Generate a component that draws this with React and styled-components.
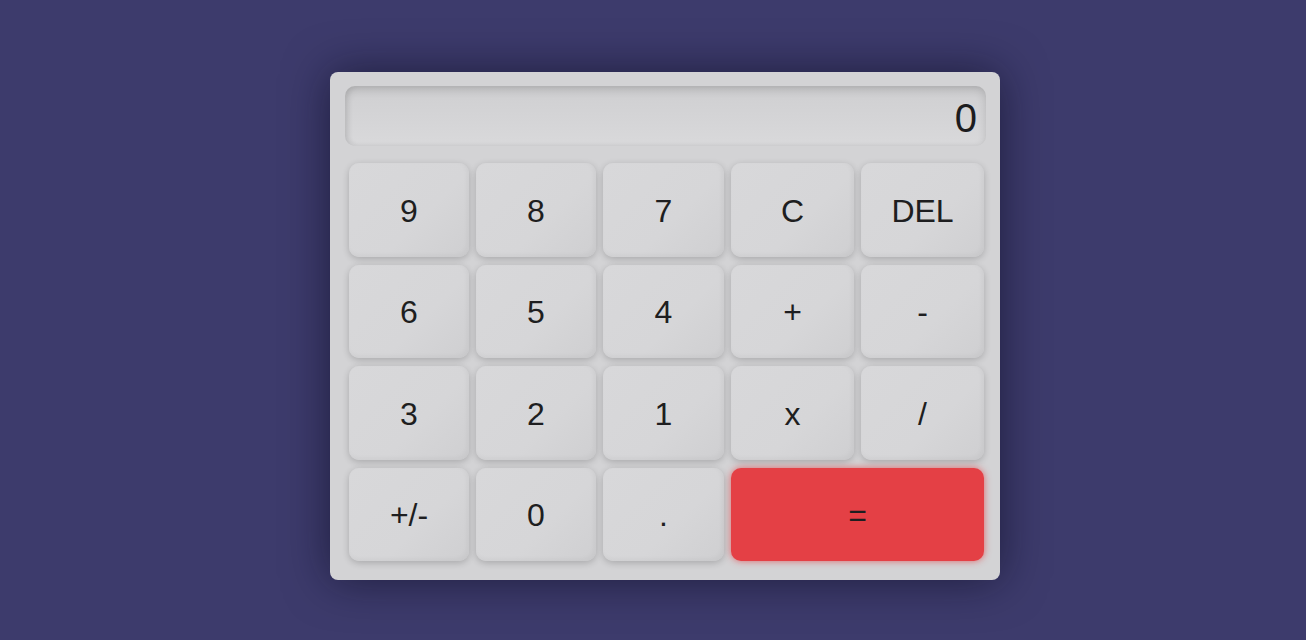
import React, { useState } from "react"
import styled, { createGlobalStyle } from "styled-components"

const GlobalStyle = createGlobalStyle`
  html, body {
    margin: 0;
    padding: 0;
    background: #3d3b6c;
    font-family: "Liberation Sans", Arial, sans-serif;
  }
`

const Page = styled.div`
  min-height: 640px;
  display: flex;
  justify-content: center;
  align-items: flex-start;
  padding: 72px 0 0 24px;
  box-sizing: border-box;
`

const Body = styled.div`
  width: 670px;
  height: 508px;
  box-sizing: border-box;
  background: #d3d3d5;
  border-radius: 8px;
  padding: 14px 17px 19px 15px;
  box-shadow: 0 0 45px rgba(10, 10, 30, 0.6);
  display: flex;
  flex-direction: column;
`

const Display = styled.div`
  height: 60px;
  margin-right: -3px;
  box-sizing: border-box;
  border-radius: 10px;
  background: linear-gradient(180deg, #cfcfd1 0%, #d9d9db 100%);
  box-shadow: inset 0 4px 8px rgba(0, 0, 0, 0.14), inset 3px 0 5px rgba(0, 0, 0, 0.06);
  display: flex;
  align-items: center;
  justify-content: flex-end;
  padding: 4px 9px 0 0;
  font-size: 40px;
  color: #1c1c1e;
`

const Keys = styled.div`
  margin: 17px 0 0 4px;
  display: grid;
  grid-template-columns: 120px 120px 121px 123px 123px;
  grid-auto-rows: 93.5px;
  column-gap: 7px;
  row-gap: 8px;
`

const Key = styled.button`
  grid-column: span ${p => p.$span || 1};
  border: none;
  border-radius: 10px;
  font-family: inherit;
  font-size: 32px;
  color: #1e1e20;
  cursor: pointer;
  background: ${p =>
    p.$accent
      ? "#e44045"
      : "linear-gradient(135deg, #d8d8da 0%, #d6d6d8 60%, #cfcfd1 100%)"};
  box-shadow: ${p =>
    p.$accent
      ? "0 0 7px rgba(228, 64, 69, 0.75)"
      : "0 2px 7px rgba(0, 0, 0, 0.2), inset -2px -2px 5px rgba(0, 0, 0, 0.04)"};
  padding: 3px 0 0;
`

const keys = [
  "9", "8", "7", "C", "DEL",
  "6", "5", "4", "+", "-",
  "3", "2", "1", "x", "/",
  "+/-", "0", ".",
]

export default function App() {
  const [value] = useState("0")
  return (
    <>
      <GlobalStyle />
      <Page>
        <Body>
          <Display>{value}</Display>
          <Keys>
            {keys.map(k => (
              <Key key={k}>{k}</Key>
            ))}
            <Key $span={2} $accent>=</Key>
          </Keys>
        </Body>
      </Page>
    </>
  )
}
